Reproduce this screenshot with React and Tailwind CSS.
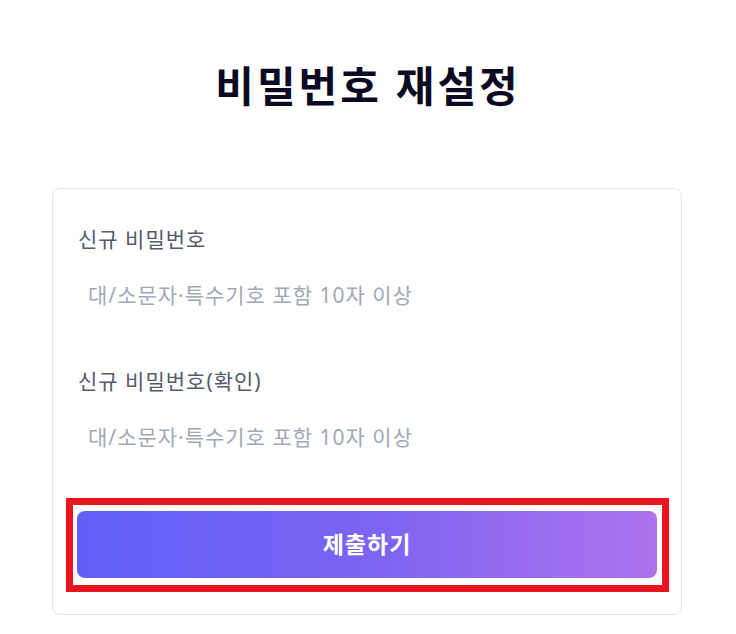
import React, { useState } from 'react';

const font = { fontFamily: '"Noto Sans", "Noto Sans CJK KR", sans-serif' };

const PasswordReset = () => {
  const [password, setPassword] = useState('');
  const [confirm, setConfirm] = useState('');

  return (
    <div className="min-h-screen bg-white pt-[56px]" style={font}>
      <h1 className="text-center text-[42px] leading-[60px] font-bold tracking-[3px] text-[#0b0a22]">비밀번호 재설정</h1>

      {/* Form card */}
      <div className="ml-[52px] mt-[72px] w-[630px] rounded-lg border border-[#e7e7f1] bg-white px-6 pt-9 pb-[36px]">
        <label className="block pl-[1px] text-[21px] leading-[28px] tracking-[1px] text-[#535b6c]">신규 비밀번호</label>
        <input
          type="password"
          value={password}
          onChange={(e) => setPassword(e.target.value)}
          placeholder="대/소문자·특수기호 포함 10자 이상"
          className="mt-[13px] block h-[58px] w-full rounded-md bg-white px-[11px] text-[21px] tracking-[1px] text-[#374151] outline-none placeholder:text-[#a3a8b6]"
        />

        <label className="mt-[43px] block pl-[1px] text-[21px] leading-[28px] tracking-[1px] text-[#535b6c]">신규 비밀번호(확인)</label>
        <input
          type="password"
          value={confirm}
          onChange={(e) => setConfirm(e.target.value)}
          placeholder="대/소문자·특수기호 포함 10자 이상"
          className="mt-[13px] block h-[58px] w-full rounded-md bg-white px-[11px] text-[21px] tracking-[1px] text-[#374151] outline-none placeholder:text-[#a3a8b6]"
        />

        <div className="relative mt-[45px]">
          <button
            type="button"
            className="flex h-[67px] w-full items-center justify-center rounded-lg bg-gradient-to-r from-[#5f60f7] via-[#7c63f2] to-[#ad72ee] text-[23px] font-bold tracking-[1px] text-white"
          >
            제출하기
          </button>
          {/* highlight box */}
          <div className="pointer-events-none absolute -top-[13px] -bottom-[14px] -left-[11px] -right-[12px] border-[7px] border-[#e8151f]" />
        </div>
      </div>
    </div>
  );
};

export default PasswordReset;
